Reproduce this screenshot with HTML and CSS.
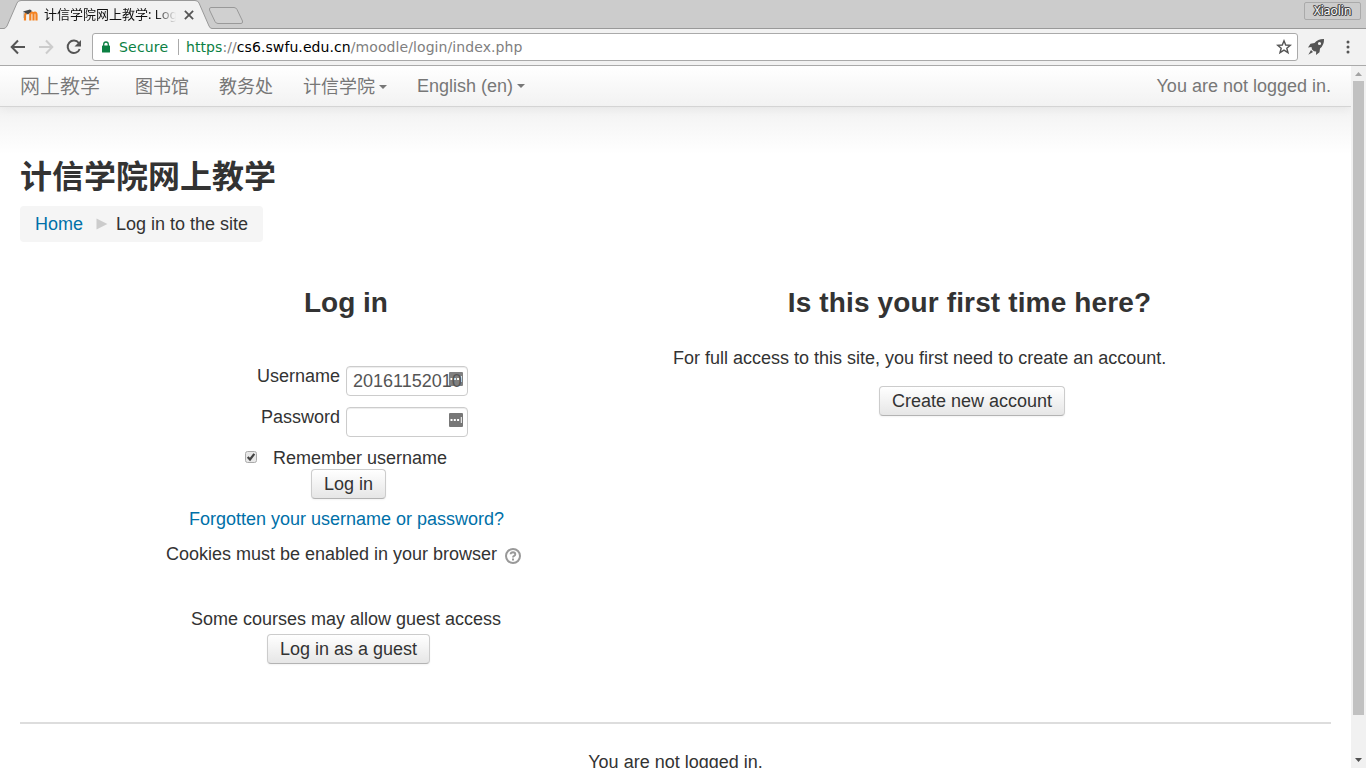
FILE: index.html
```html
<!DOCTYPE html>
<html lang="en">
<head>
<meta charset="utf-8">
<title>计信学院网上教学: Log in to the site</title>
<link rel="stylesheet" href="styles.css">
</head>
<body>
<header class="browser">
  <div class="tabstrip">
    <svg class="tabshapes" width="250" height="29" viewBox="0 0 250 29">
      <path d="M0 28.5H4Q6 28 7 26L17 3Q18 .5 21 .5H195Q198 .5 199 3L209 26Q210 28.5 212 28.5V29H0Z" fill="#f2f2f2"/>
      <path d="M0 28.5H4Q6 28 7 26L17 3Q18 .5 21 .5H195Q198 .5 199 3L209 26Q210 28.5 212 28.5H250" fill="none" stroke="#999"/>
      <path d="M211 7.500H234Q236 7.500 237 9.500L242.500 21Q243 23.500 241 23.500H218Q216 23.500 215 21.500L209.500 10Q209 7.500 211 7.500Z" fill="#d0d0d0" stroke="#999"/>
    </svg>
    <div class="tab">
      <svg class="favicon" width="16" height="16" viewBox="0 0 16 16">
        <path d="M3 13.500V8.500Q3 6.500 4.800 6.500M8.300 13.500V8Q8.300 5.500 10 5.500Q11.500 5.500 11.500 8V13.500M11.500 8Q11.500 5.500 13 5.500Q14.500 5.500 14.500 8V13.500" fill="none" stroke="#f58220" stroke-width="2.200"/>
        <path d="M1 4.500L8 2.500L10 4L6 7.500L3.500 6Z" fill="#444"/><path d="M2 5V11" stroke="#999" stroke-width=".7"/>
      </svg>
      <span class="tabtitle">计信学院网上教学: Log</span>
      <svg class="tabclose" width="10" height="10" viewBox="0 0 9 9"><path d="M.8.800L8.200 8.200M8.200.800L.8 8.200" stroke="#555" stroke-width="1.600"/></svg>
    </div>
    <span class="profile">Xiaolin</span>
  </div>
  <div class="toolbar">
    <svg class="navicons" width="92" height="36" viewBox="0 0 92 36">
      <path d="M25 18H12M18 11.500L11.700 18L18 24.500" fill="none" stroke="#555" stroke-width="2"/>
      <path d="M39 18H52M46 11.500L52.300 18L46 24.500" fill="none" stroke="#ccc" stroke-width="2"/>
      <path d="M78.800 14A6.200 6.200 0 1 0 79.700 20" fill="none" stroke="#555" stroke-width="2"/>
      <path d="M81 11V17.500H74.500Z" fill="#555"/>
    </svg>
    <div class="omnibox">
      <svg class="lock" width="10" height="12" viewBox="0 0 10 12"><rect x="1" y="4.500" width="8" height="7" rx=".6" fill="#0b8043"/><path d="M2.700 5V3.300a2.300 2.300 0 0 1 4.600 0V5" fill="none" stroke="#0b8043" stroke-width="1.300"/></svg>
      <span class="secure">Secure</span>
      <span class="url"><span class="scheme">https</span>://<span class="host">cs6.swfu.edu.cn</span>/moodle/login/index.php</span>
      <svg class="star" width="16" height="16" viewBox="0 0 16 16"><path d="M8 1.800L9.700 6L14.300 6.300L10.800 9.200L12 13.700L8 11.200L4 13.700L5.200 9.200L1.700 6.300L6.300 6Z" fill="none" stroke="#555" stroke-width="1.400"/></svg>
    </div>
    <svg class="rocket" width="18" height="18" viewBox="0 0 18 18"><path fill-rule="evenodd" d="M17 1Q11 .8 7.500 5L3.500 5.700L1 9.500L4.500 9L5 11.500L7 13.200L9.200 13.500L9 17L12.500 14.200L13 10.500Q17.300 7 17 1ZM12.500 3.900a1.600 1.600 0 1 1 0 3.200a1.600 1.600 0 1 1 0-3.200Z" fill="#555"/><path d="M4 12L1.300 16.700L6 14Z" fill="#555"/></svg>
    <svg class="menu" width="4" height="14" viewBox="0 0 4 14"><g fill="#555"><circle cx="2" cy="2" r="1.500"/><circle cx="2" cy="7" r="1.500"/><circle cx="2" cy="12" r="1.500"/></g></svg>
  </div>
</header>
<div class="viewport">
  <div class="page">
    <nav class="navbar">
      <a class="brand">网上教学</a>
      <a class="item cjk">图书馆</a>
      <a class="item cjk">教务处</a>
      <a class="item cjk">计信学院<i class="caret"></i></a>
      <a class="item">English (en)<i class="caret"></i></a>
      <span class="status">You are not logged in.</span>
    </nav>
    <main class="content">
      <h1 class="title">计信学院网上教学</h1>
      <div class="breadcrumb"><a class="link">Home</a><svg class="sep" width="12" height="12" viewBox="0 0 12 12"><path d="M.5.500L11.500 6L.5 11.500Z" fill="#ccc"/></svg><span>Log in to the site</span></div>
      <div class="columns">
        <section class="login">
          <h2 class="heading">Log in</h2>
          <form class="form">
            <label class="label">Username</label>
            <div class="field"><svg class="key" width="14" height="14" viewBox="0 0 14 14"><rect width="14" height="14" rx="1" fill="#808080"/><path d="M1.500 6h2v2h-2zM4.800 6h2v2h-2zM8.100 6h2v2h-2zM11.800 4h1v6h-1z" fill="#fff"/></svg><span class="value">20161152010</span></div>
            <label class="label">Password</label>
            <div class="field"><svg class="key" width="14" height="14" viewBox="0 0 14 14"><rect width="14" height="14" rx="1" fill="#777"/><path d="M1.500 6h2v2h-2zM4.800 6h2v2h-2zM8.100 6h2v2h-2zM11.800 4h1v6h-1z" fill="#fff"/></svg></div>
          </form>
          <div class="remember">
            <svg class="check" width="12" height="12" viewBox="0 0 12 12"><rect x=".5" y=".5" width="11" height="11" rx="2" fill="#e8e8e8" stroke="#aaa"/><path d="M2.700 6L5 8.500L9.300 2.800" fill="none" stroke="#444" stroke-width="2.200"/></svg>
            <span>Remember username</span>
          </div>
          <button class="btn">Log in</button>
          <a class="link forgot">Forgotten your username or password?</a>
          <div class="cookies">Cookies must be enabled in your browser<svg class="help" width="16" height="16" viewBox="0 0 16 16"><circle cx="8" cy="8" r="7" fill="none" stroke="#999" stroke-width="2"/><path d="M5.600 6.300Q5.700 4.300 8 4.300Q10.300 4.400 10.300 6.200Q10.300 7.200 9.100 7.900Q8 8.500 8 9.500" fill="none" stroke="#999" stroke-width="1.900"/><rect x="7" y="10.500" width="2" height="2" fill="#999"/></svg></div>
          <div class="guest">Some courses may allow guest access</div>
          <button class="btn">Log in as a guest</button>
        </section>
        <section class="signup">
          <h2 class="heading wide">Is this your first time here?</h2>
          <p class="intro">For full access to this site, you first need to create an account.</p>
          <button class="btn create">Create new account</button>
        </section>
      </div>
      <footer class="footer">You are not logged in.</footer>
    </main>
  </div>
  <div class="scrollbar">
    <svg width="15" height="15" viewBox="0 0 15 15"><path d="M4 10L7.500 6L11 10Z" fill="#a3a3a3"/></svg>
    <div class="thumb"></div>
    <svg width="15" height="15" viewBox="0 0 15 15"><path d="M4 5H11L7.500 9Z" fill="#505050"/></svg>
  </div>
</div>
</body>
</html>
```
FILE: styles.css
```css
* { box-sizing: border-box; }
body {
  margin: 0;
  width: 1366px;
  height: 768px;
  overflow: hidden;
  display: flex;
  flex-direction: column;
  background: #fff;
  color: #333;
  font-family: "Liberation Sans", "Noto Sans CJK SC", sans-serif;
  font-size: 18px;
  line-height: 20px;
}
.browser { flex: none; height: 66px; border-bottom: 1px solid #aaa; background: #f2f2f2; }
.tabstrip {
  position: relative;
  display: flex;
  justify-content: space-between;
  height: 29px;
  background: #ccc;
  border-bottom: 1px solid #999;
}
.tabshapes { position: absolute; left: 0; top: 0; }
.tab {
  position: relative;
  display: flex;
  align-items: center;
  width: 200px;
  height: 29px;
  padding-left: 22px;
}
.favicon { flex: none; margin-right: 6px; }
.tabtitle {
  width: 133px;
  white-space: nowrap;
  color: #111;
  font-family: "Noto Sans", "Noto Sans CJK SC", sans-serif;
  font-size: 13px;
  padding-bottom: 2px;
  -webkit-mask-image: linear-gradient(to right, #000 112px, transparent 132px);
  mask-image: linear-gradient(to right, #000 112px, transparent 132px);
}
.tabclose { flex: none; margin-left: 7px; }
.profile {
  width: 57px;
  height: 18px;
  margin: 2px 5px 0 0;
  border: 1px solid #aaa;
  border-radius: 2px;
  text-align: center;
  color: #fff;
  font: 12px/16px "Noto Sans", sans-serif;
  text-shadow: 1px 0 #444, -1px 0 #444, 0 1px #444, 0 -1px #444, 1px 1px #555, -1px -1px #555;
}
.toolbar { display: flex; align-items: center; height: 36px; }
.navicons { flex: none; }
.omnibox {
  display: flex;
  align-items: center;
  width: 1206px;
  height: 28px;
  padding: 0 5px 0 8px;
  border: 1px solid #aaa;
  border-radius: 3px;
  background: #fff;
  font: 14px/20px "DejaVu Sans", sans-serif;
}
.lock { margin-right: 8px; }
.secure { width: 60px; margin-right: 7px; color: #0b8043; border-right: 1px solid #aaa; line-height: 16px; letter-spacing: .2px; }
.url { color: #808080; letter-spacing: .08px; }
.scheme { color: #0b8043; }
.host { color: #000; }
.star { margin-left: auto; }
.rocket { margin-left: 9px; }
.menu { margin-left: 21px; }

.viewport { flex: 1; display: flex; min-height: 0; }
.page {
  width: 1351px;
  overflow: hidden;
  background: linear-gradient(#f2f2f2 40px, #fff 88px);
}
.navbar {
  display: flex;
  align-items: center;
  height: 41px;
  padding: 0 20px;
  border-bottom: 1px solid #d4d4d4;
  background: linear-gradient(#fff, #f2f2f2);
  box-shadow: 0 1px 10px rgba(0, 0, 0, .065);
  color: #777;
  white-space: nowrap;
}
.brand { margin-right: 35px; padding-top: 1px; font-size: 20px; font-weight: 350; }
.item { margin-right: 30px; }
.cjk { padding-top: 1px; }
.caret {
  display: inline-block;
  margin-left: 4px;
  vertical-align: 4px;
  border: 4px solid transparent;
  border-top-color: #777;
  border-bottom: 0;
}
.status { margin-left: auto; }
.content { padding: 50px 20px 0; }
.title { margin: 0; font-size: 32px; line-height: 40px; }
.link { color: #0070a8; }
.breadcrumb {
  display: flex;
  align-items: center;
  width: 243px;
  height: 36px;
  margin-top: 9px;
  padding: 0 15px;
  border-radius: 4px;
  background: #f5f5f5;
  white-space: nowrap;
}
.sep { margin: 0 8px 0 13px; }
.columns { display: flex; height: 482px; padding-top: 41px; border-bottom: 2px solid #ddd; }
.login { display: flex; flex-direction: column; align-items: center; width: 653px; padding-right: 1px; }
.signup { width: 593px; }
.heading { margin: 0; height: 40px; font-size: 28px; line-height: 40px; text-align: center; }
.wide { letter-spacing: .14px; }
.form {
  display: grid;
  grid-template-columns: 320px 122px;
  grid-auto-rows: 30px;
  gap: 11px 6px;
  width: 652px;
  margin: 43px 0 0;
}
.label { text-align: right; }
.field {
  position: relative;
  padding: 0 6px;
  border: 1px solid #ccc;
  border-radius: 4px;
  background: #fff;
  box-shadow: inset 0 1px 1px rgba(0, 0, 0, .075);
  color: #555;
  line-height: 28px;
}
.key { position: absolute; right: 4px; top: 5px; }
.value { position: relative; }
.remember { display: flex; align-items: center; gap: 16px; height: 20px; margin-top: 11px; }
.check { margin-bottom: 2px; }
.btn {
  display: block;
  height: 30px;
  margin: 1px 0 0;
  padding: 0 12px;
  border: 1px solid #ccc;
  border-bottom-color: #b3b3b3;
  border-radius: 4px;
  background: linear-gradient(#fff, #e6e6e6);
  box-shadow: inset 0 1px 0 rgba(255, 255, 255, .2), 0 1px 2px rgba(0, 0, 0, .05);
  color: #333;
  font: 18px/20px "Liberation Sans", sans-serif;
}
.login .btn { margin-left: 5px; }
.forgot { margin: 10px 0 0 1px; }
.cookies { display: flex; margin: 15px 5px 0 0; }
.help { margin: 4px 0 0 8px; }
.guest { margin: 45px 0 4px; }
.intro { margin: 25px 0 18px; }
.create { margin-left: 206px; }
.footer { height: 52px; padding-top: 28px; text-align: center; }
.scrollbar { display: flex; flex-direction: column; align-items: center; width: 15px; background: #f1f1f1; }
.thumb { width: 11px; height: 634px; margin-bottom: auto; background: #c1c1c1; }
```
